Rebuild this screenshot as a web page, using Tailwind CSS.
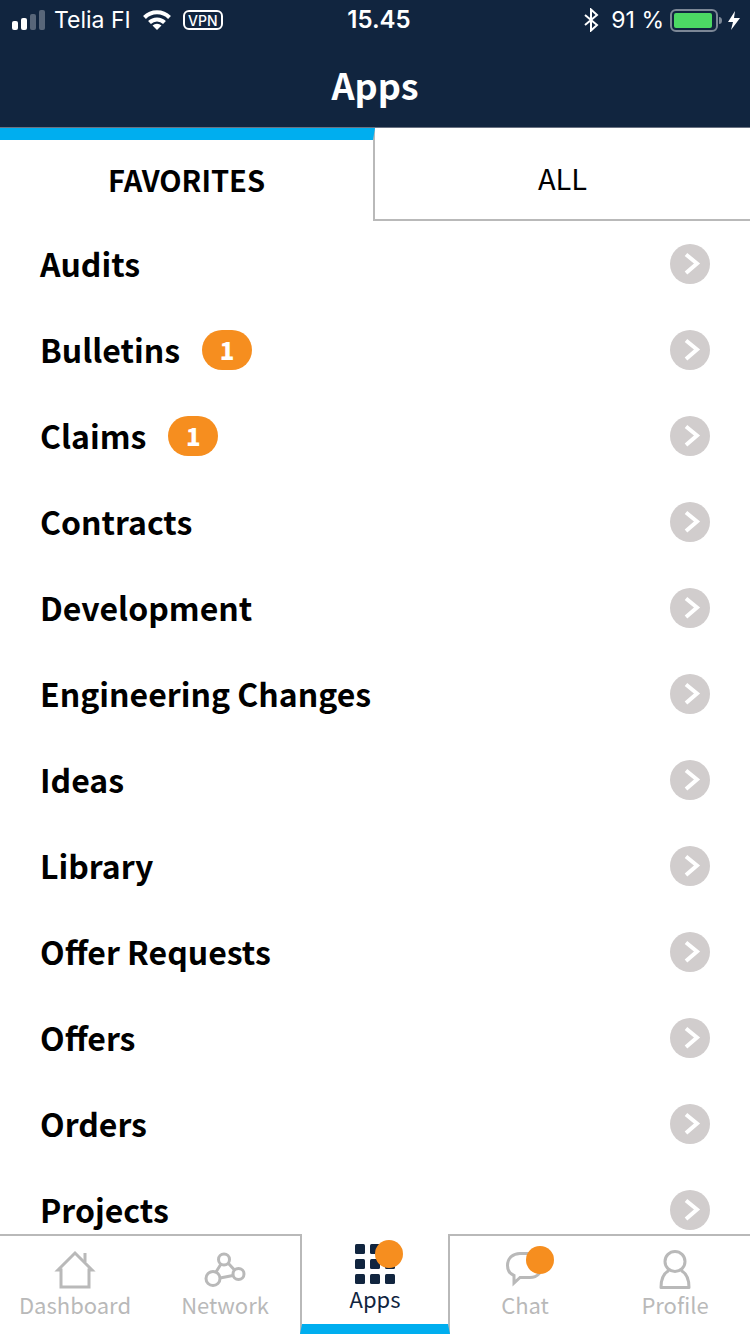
<!DOCTYPE html>
<html lang="en">
	<head>
		<meta charset="UTF-8" />
		<meta name="viewport" content="width=device-width, initial-scale=1.0" />
		<title>Apps</title>
		<script src="https://cdn.jsdelivr.net/npm/@tailwindcss/browser@4"></script>
	</head>
	<body class="flex h-screen flex-col overflow-hidden bg-white font-['Noto_Sans_CJK_SC',sans-serif] text-black">
		<header class="border-b border-gray-500 bg-[#11253f] text-white">
			<!-- status bar -->
			<div class="grid h-10 grid-cols-[1fr_auto_1fr] items-center px-2 font-[Inter,sans-serif] text-[23px]">
				<div class="flex items-center pl-1">
					<svg class="mr-2" width="34" height="20" viewBox="0 0 34 20" fill="#fff">
						<rect x="0" y="11" width="6" height="9" rx="2" />
						<rect x="9" y="8" width="6" height="12" rx="2" />
						<rect x="18" y="4" width="6" height="16" rx="2" opacity=".3" />
						<rect x="27" y="0" width="6" height="20" rx="2" opacity=".3" />
					</svg>
					<span>Telia FI</span>
					<svg class="mx-3" width="28" height="20" viewBox="0 0 28 20" fill="none" stroke="#fff" stroke-width="4">
						<path d="M1.5 7.5a17.5 17.5 0 0 1 25 0" />
						<path d="M6.5 12.5a10.6 10.6 0 0 1 15 0" />
						<path d="M14 20l-4.5-4.5a6.4 6.4 0 0 1 9 0z" fill="#fff" stroke="none" />
					</svg>
					<span class="flex h-5 w-10 items-center justify-center rounded-md border-2 border-white text-[14px] font-medium">VPN</span>
				</div>
				<span class="pl-2 text-2xl font-semibold">15.45</span>
				<div class="flex items-center justify-end">
					<svg class="mr-3" width="16" height="24" viewBox="0 0 16 24" fill="none" stroke="#fff" stroke-width="2">
						<path d="M2 7l12 10-6 5.5v-21L14 7 2 17" />
					</svg>
					<span class="whitespace-nowrap">91 %</span>
					<svg class="ml-1" width="74" height="24" viewBox="0 0 74 24">
						<rect x="3" y="2" width="46" height="21" rx="5" fill="none" stroke="#7c8796" stroke-width="2" />
						<rect x="6" y="5" width="38" height="15" rx="2" fill="#4cd964" />
						<path d="M51 9q3 0 3 3.5t-3 3.5z" fill="#7c8796" />
						<path d="M67 3l-7 11h5l-2 8 9-12h-6z" fill="#fff" />
					</svg>
				</div>
			</div>
			<h1 class="flex h-[87px] items-center justify-center text-4xl font-bold">Apps</h1>
		</header>

		<div class="flex h-[93px] shrink-0" role="tablist">
			<button role="tab" aria-selected="true" class="w-1/2 border-t-12 border-r-2 border-t-[#00aeef] border-r-[#b9b9b9] pb-0.5 text-[29px] font-bold">FAVORITES</button>
			<button role="tab" aria-selected="false" class="w-1/2 border-b-2 border-[#b9b9b9] pt-2 text-[29px]">ALL</button>
		</div>

		<main class="min-h-0 flex-1 overflow-y-auto [scrollbar-width:none]">
			<ul id="apps" class="text-[32px] font-bold"></ul>
		</main>

		<nav class="grid h-[100px] shrink-0 grid-cols-5 bg-white text-[22px] leading-7 text-[#b9b9b9]">
			<a href="#dashboard" class="flex flex-col items-center border-t-2 border-[#b9b9b9] pt-3">
				<svg width="42" height="42" viewBox="0 0 42 42" fill="none" stroke="#b9b9b9" stroke-width="3">
					<path d="M7 22v17h28V22h3L21 5 4 22z" />
					<path d="M31 14V5" />
				</svg>
				Dashboard
			</a>
			<a href="#network" class="flex flex-col items-center border-t-2 border-[#b9b9b9] pt-3">
				<svg width="42" height="42" viewBox="0 0 42 42" fill="none" stroke="#b9b9b9" stroke-width="3">
					<circle cx="20" cy="11.5" r="5.5" />
					<circle cx="9" cy="30.5" r="7" />
					<circle cx="34.5" cy="26" r="5.5" />
					<path d="M17 16l-5 8M24 15l6.5 7M16 30l13-2.5" />
				</svg>
				Network
			</a>
			<a href="#apps" aria-current="page" class="flex flex-col items-center border-x-2 border-b-10 border-x-[#b9b9b9] border-b-[#00aeef] pt-2 text-[#11253f]">
				<span class="relative">
					<svg width="40" height="42" viewBox="0 0 40 42" fill="#11253f">
						<rect x="0" y="2" width="10" height="10" rx="1.5" />
						<rect x="15" y="2" width="10" height="10" rx="1.5" />
						<rect x="30" y="2" width="10" height="10" rx="1.5" />
						<rect x="0" y="17" width="10" height="10" rx="1.5" />
						<rect x="15" y="17" width="10" height="10" rx="1.5" />
						<rect x="30" y="17" width="10" height="10" rx="1.5" />
						<rect x="0" y="32" width="10" height="10" rx="1.5" />
						<rect x="15" y="32" width="10" height="10" rx="1.5" />
						<rect x="30" y="32" width="10" height="10" rx="1.5" />
					</svg>
					<span class="absolute -top-0.5 -right-2 size-7 rounded-full bg-[#f68e1f]"></span>
				</span>
				Apps
			</a>
			<a href="#chat" class="flex flex-col items-center border-t-2 border-[#b9b9b9] pt-3">
				<span class="relative">
					<svg width="42" height="42" viewBox="0 0 42 42" fill="none" stroke="#b9b9b9" stroke-width="3">
						<path d="M16 29.5L10 35v-7.5C6 26 3.5 22 3.5 17.5 3.5 10 9 5.5 16 5.5h10c16 0 16 24 0 24z" />
					</svg>
					<span class="absolute -top-0.5 -right-2 size-7 rounded-full bg-[#f68e1f]"></span>
				</span>
				Chat
			</a>
			<a href="#profile" class="flex flex-col items-center border-t-2 border-[#b9b9b9] pt-3">
				<svg width="42" height="42" viewBox="0 0 42 42" fill="none" stroke="#b9b9b9" stroke-width="3">
					<circle cx="21" cy="13.5" r="10" />
					<path d="M15 22.5C10 25 7 30 7 39.5h28C35 30 32 25 27 22.5" stroke-linejoin="round" />
				</svg>
				Profile
			</a>
		</nav>

		<script>
			const apps = [
				{ name: 'Audits' },
				{ name: 'Bulletins', count: 1 },
				{ name: 'Claims', count: 1 },
				{ name: 'Contracts' },
				{ name: 'Development' },
				{ name: 'Engineering Changes' },
				{ name: 'Ideas' },
				{ name: 'Library' },
				{ name: 'Offer Requests' },
				{ name: 'Offers' },
				{ name: 'Orders' },
				{ name: 'Projects' },
			]
			const list = document.getElementById('apps')

			apps.forEach((app) => {
				const li = document.createElement('li')
				const badge = app.count
					? `<span class="ml-[22px] flex h-10 w-[50px] items-center justify-center rounded-[20px] bg-[#f68e1f] text-2xl font-black text-white">${app.count}</span>`
					: ''
				li.innerHTML = `
					<a href="#" class="flex h-[86px] items-center px-10">
						<span class="pb-0.5">${app.name}</span>
						${badge}
						<svg class="ml-auto" width="40" height="40" viewBox="0 0 40 40" fill="none">
							<circle cx="20" cy="20" r="20" fill="#d1cdcd" />
							<path d="M16 10.5l11 9-11 9.5" stroke="#fff" stroke-width="4" />
						</svg>
					</a>`
				list.appendChild(li)
			})
		</script>
	</body>
</html>
